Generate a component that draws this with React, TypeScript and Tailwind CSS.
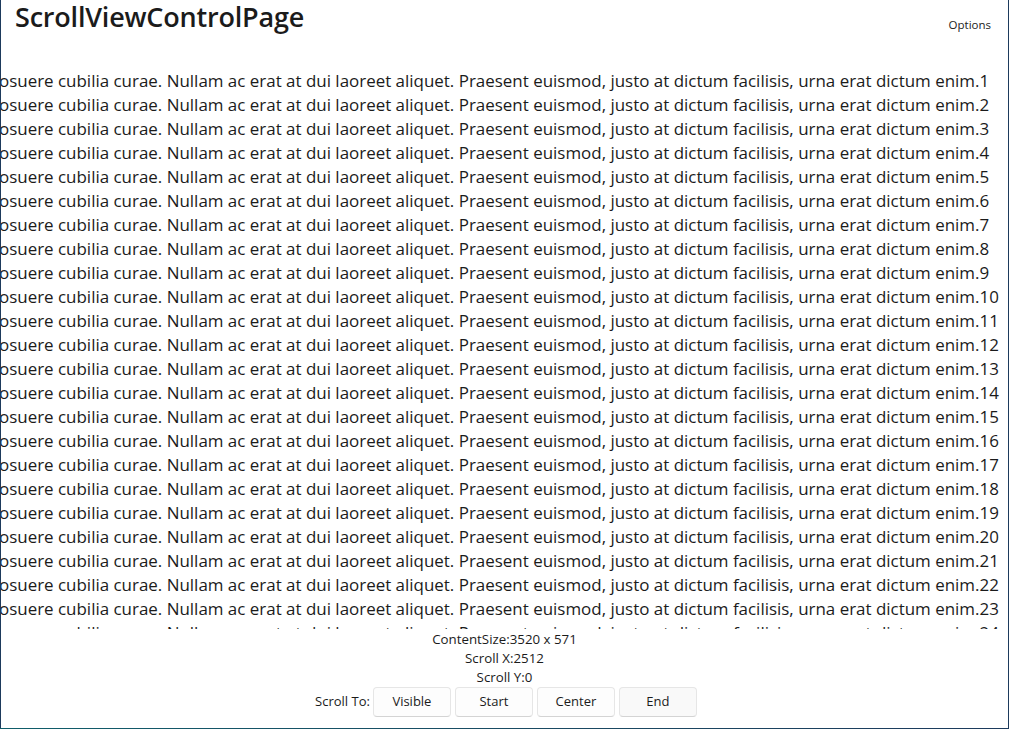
import React from "react";

const LINE =
  "osuere cubilia curae. Nullam ac erat at dui laoreet aliquet. Praesent euismod, justo at dictum facilisis, urna erat dictum enim.";

export default function App() {
  const rows = Array.from({ length: 24 }, (_, i) => i + 1);
  const font = { fontFamily: '"Open Sans", "Noto Sans", sans-serif' };
  return (
    <div className="w-[1010px] h-[729px] bg-white overflow-hidden" style={font}>
      <div className="w-[1009px] h-[729px] flex flex-col border-l border-r border-[#1d3a5c] relative">
        {/* header */}
        <div className="h-[69px] flex items-start justify-between shrink-0">
          <div className="pl-[14px] text-[27px] font-semibold text-[#1b1b1b] leading-[33px] tracking-[-0.2px]">
            ScrollViewControlPage
          </div>
          <div className="pr-[17px] pt-[16px] text-[11.5px] text-[#1b1b1b] leading-[18px]">Options</div>
        </div>
        {/* scroll view */}
        <div className="h-[559.5px] overflow-hidden shrink-0">
          <div className="ml-[-2px] text-[16.95px] leading-[24px] text-[#1b1b1b] whitespace-nowrap">
            {rows.map((r) => (
              <div key={r} className="h-[24px]">
                {LINE}
                {r}
              </div>
            ))}
          </div>
        </div>
        {/* info */}
        <div className="mt-[1.5px] flex flex-col items-center text-[13.3px] leading-[19px] text-[#1b1b1b]">
          <div>ContentSize:3520 x 571</div>
          <div>Scroll X:2512</div>
          <div>Scroll Y:0</div>
        </div>
        <div className="flex items-center justify-center gap-[4px] pl-[3px]">
          <span className="text-[13px] text-[#1b1b1b] mr-[-1px]">Scroll To:</span>
          {["Visible", "Start", "Center", "End"].map((b) => (
            <button
              key={b}
              className={
                "w-[78px] h-[30px] rounded-[4px] border border-[#e6e6e6] border-b-[#d4d4d4] text-[13px] text-[#1b1b1b] " +
                (b === "End" ? "bg-[#f9f9f9]" : "bg-[#fdfdfd]")
              }
            >
              {b}
            </button>
          ))}
        </div>
        <div className="absolute left-[-1px] right-[-1px] bottom-0 h-px bg-gradient-to-r from-[#0f5d6a] to-[#1d3a5c]" />
      </div>
    </div>
  );
}
